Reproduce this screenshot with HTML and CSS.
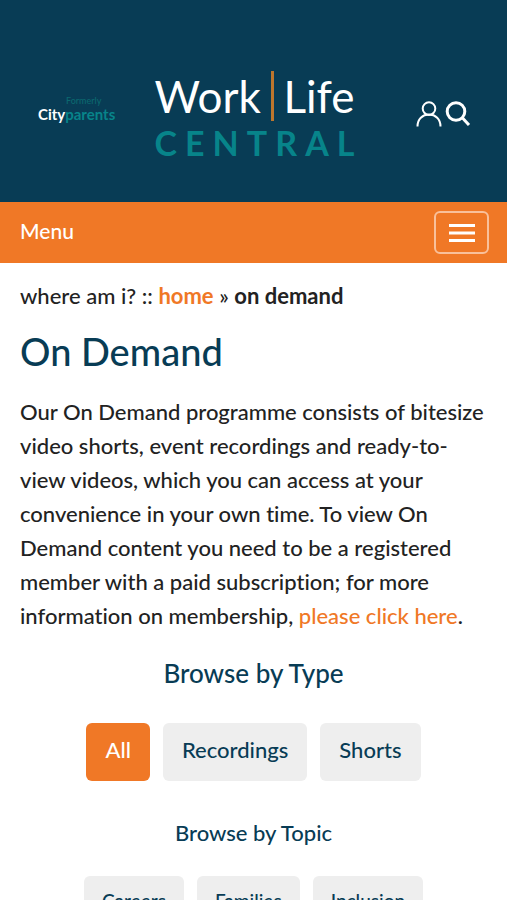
FILE: index.html
```html
<!DOCTYPE html>
<html lang="en">
<head>
<meta charset="utf-8">
<meta name="viewport" content="width=device-width, initial-scale=1">
<title>On Demand | Work Life Central</title>
<link rel="stylesheet" href="styles.css">
</head>
<body>
<header class="masthead">
  <div class="former">
    <span class="former-note">Formerly</span>
    <span class="former-name">City<span class="teal">parents</span></span>
  </div>
  <a class="logo" href="#">
    <span class="logo-top"><span>Work</span><span class="logo-bar"></span><span>Life</span></span>
    <span class="logo-bottom"><span>C</span><span>E</span><span>N</span><span>T</span><span>R</span><span>A</span><span>L</span></span>
  </a>
  <div class="tools">
    <a href="#" aria-label="Account"><svg width="26" height="26" viewBox="0 0 26 26"><circle cx="13" cy="7.6" r="6.3"/><path d="M1.5 25.5C1.5 18 6.5 13.6 13 13.6S24.500 18 24.500 25.500"/></svg></a>
    <a href="#" aria-label="Search"><svg width="26" height="26" viewBox="0 0 26 26"><circle class="thick" cx="11" cy="10.500" r="8.800"/><path class="thick" d="M17.300 16.800L24 24"/></svg></a>
  </div>
</header>
<nav class="menu-bar">
  <span class="menu-label">Menu</span>
  <button class="menu-toggle" type="button" aria-label="Toggle menu"><svg width="28" height="20" viewBox="0 0 28 20"><path class="line" d="M1 2.500H27M1 10H27M1 17.500H27"/></svg></button>
</nav>
<main class="content">
  <p class="crumbs">where am i? :: <a href="#">home</a> » <strong>on demand</strong></p>
  <h1>On Demand</h1>
  <p class="intro">Our On Demand programme consists of bitesize video shorts, event recordings and ready-to-view videos, which you can access at your convenience in your own time. To view On Demand content you need to be a registered member with a paid subscription; for more information on membership, <a href="#">please click here</a>.</p>
  <section class="browse">
    <h2>Browse by Type</h2>
    <div class="chips">
      <button class="chip active" type="button">All</button>
      <button class="chip" type="button">Recordings</button>
      <button class="chip" type="button">Shorts</button>
    </div>
  </section>
  <section class="browse topics">
    <h3>Browse by Topic</h3>
    <div class="chips">
      <button class="chip" type="button">Careers</button>
      <button class="chip" type="button">Families</button>
      <button class="chip" type="button">Inclusion</button>
    </div>
  </section>
</main>
</body>
</html>
```
FILE: styles.css
```css
* { box-sizing: border-box; }
body {
  margin: 0;
  background: #fff;
  color: #222;
  font: 500 22px/34px Lato, "Open Sans", sans-serif;
  font-variant-ligatures: none;
}
a { color: #f07826; text-decoration: none; }
h1, h2, h3, p { margin: 0; }
h1, h2, h3 { color: #083c55; font-weight: 500; }

.masthead {
  display: grid;
  grid-template-columns: 1fr auto 1fr;
  align-items: center;
  padding: 71px 36px 42px 38px;
  background: #083c55;
}
.former { display: flex; flex-direction: column; padding-bottom: 14px; }
.former-note { padding-left: 28px; color: #0b686f; font-size: 9px; line-height: 10px; }
.former-name { color: #fff; font-size: 15px; line-height: 16px; font-weight: 700; }
.teal { color: #07848a; }
.logo { display: flex; flex-direction: column; gap: 5px; width: 200px; color: #fff; }
.logo-top {
  display: flex;
  justify-content: space-between;
  font-size: 44px;
  line-height: 50px;
  font-weight: 400;
}
.logo-bar { width: 3px; background: #bd762d; }
.logo-bottom {
  display: flex;
  justify-content: space-between;
  color: #07848a;
  font-size: 34px;
  line-height: 34px;
  font-weight: 700;
}
.tools { display: flex; justify-content: flex-end; gap: 3px; padding-bottom: 4px; }
.tools a { display: flex; }
svg { fill: none; stroke: #fff; stroke-width: 2; }
.thick, .line { stroke-width: 3; }

.menu-bar {
  display: flex;
  align-items: center;
  justify-content: space-between;
  height: 61px;
  padding: 0 18px 0 20px;
  background: #f07826;
  color: #fff;
}
.menu-label { padding-bottom: 4px; font-size: 21px; }
.menu-toggle {
  display: grid;
  place-items: center;
  width: 55px;
  height: 43px;
  padding: 0;
  border: 2px solid #f9c09a;
  border-radius: 6px;
  background: none;
}

.content { padding: 16px 20px 20px; }
.crumbs a, .crumbs strong { font-weight: 700; }
h1 { margin: 14px 0 20px; font-size: 38px; line-height: 48px; }
.browse { text-align: center; }
.browse h2 { margin: 24px 0 34px; font-size: 26px; line-height: 32px; }
.browse h3 { margin: 36px 0 27px; font-size: 22px; line-height: 32px; }
.chips { display: flex; flex-wrap: wrap; justify-content: center; gap: 13px; }
.chip {
  padding: 10px 19px 14px;
  border: 0;
  border-radius: 6px;
  background: #eee;
  color: #083c55;
  font: inherit;
}
.chip.active { background: #f07826; color: #fff; }
.topics .chip { padding: 8px 18px 12px; font-size: 19px; }
```
